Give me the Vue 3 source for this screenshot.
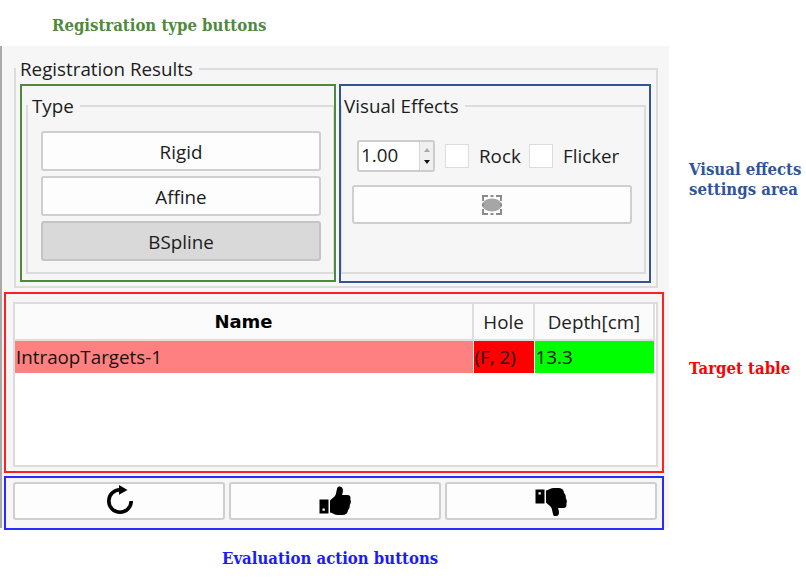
<template>
  <div class="page">
    <div class="panel">
      <fieldset class="group results">
        <legend>Registration Results</legend>
        <div class="results-row">
          <fieldset class="group type-group">
            <legend>Type</legend>
            <button v-for="t in types" :key="t" class="btn type-btn" :class="{ checked: t === selectedType }">{{ t }}</button>
          </fieldset>
          <fieldset class="group effects-group">
            <legend>Visual Effects</legend>
            <div class="effects-row">
              <div class="spinbox">
                <span class="spin-value">1.00</span>
                <span class="spin-arrows">
                  <span class="arrow up"></span>
                  <span class="arrow down"></span>
                </span>
              </div>
              <span class="check"></span>
              <span class="check-label rock">Rock</span>
              <span class="check"></span>
              <span class="check-label">Flicker</span>
            </div>
            <button class="btn effect-btn">
              <svg width="22" height="22" viewBox="0 0 22 22">
                <ellipse cx="11" cy="11" rx="10" ry="6.5" fill="#a6a6a6" />
                <path d="M7 2H2V7M15 2h5V7M7 20H2V15M15 20h5V15M9.5 2h3M9.5 20h3M2 9.5v3M20 9.5v3" fill="none" stroke="#8c8c8c" stroke-width="2" />
              </svg>
            </button>
          </fieldset>
        </div>
      </fieldset>

      <div class="table-frame">
        <table>
          <thead>
            <tr>
              <th class="name-col">Name</th>
              <th class="hole-col">Hole</th>
              <th class="depth-col">Depth[cm]</th>
            </tr>
          </thead>
          <tbody>
            <tr v-for="row in targets" :key="row.name">
              <td class="cell-name">{{ row.name }}</td>
              <td class="cell-hole">{{ row.hole }}</td>
              <td class="cell-depth">{{ row.depth }}</td>
            </tr>
          </tbody>
        </table>
      </div>

      <div class="actions">
        <button class="btn action-btn">
          <svg width="30" height="34" viewBox="0 0 30 34">
            <path d="M16 5.8A11.2 11.2 0 1 0 27.2 17" fill="none" stroke="#000" stroke-width="3.6" />
            <path d="M15 1L23.5 6L15 10.8Z" fill="#000" />
          </svg>
        </button>
        <button class="btn action-btn">
          <svg width="32" height="30" viewBox="0 0 32 30">
            <path fill-rule="evenodd" d="M0.5 13.5H9.5V27.5H0.5ZM3.5 22.5V24.8H5.8V22.5Z" fill="#000" />
            <path d="M11 14.5C13 12.5 15.5 11 16.5 9C17.5 6.5 17.5 3.5 18.5 1.5C19.5 0 22 0.3 23.3 2C24.5 3.8 23.8 7 23 9H28.5C31 9 32 11 31.3 13C32.2 15 32 17.5 30.8 18.8C31 21 30.3 23 29 24C29 26.8 27 28.8 24 29H19C16 29 13.5 27 11 26.5Z" fill="#000" />
          </svg>
        </button>
        <button class="btn action-btn">
          <svg width="32" height="30" viewBox="0 -1 32 30">
            <path fill-rule="evenodd" d="M0.5 2.5H9.5V16.5H0.5ZM3.5 5.2V7.5H5.8V5.2Z" fill="#000" />
            <path d="M11 15.5C13 17.5 15.5 19 16.5 21C17.5 23.5 17.5 26.5 18.5 28.5C19.5 30 22 29.7 23.3 28C24.5 26.2 23.8 23 23 21H28.5C31 21 32 19 31.3 17C32.2 15 32 12.5 30.8 11.2C31 9 30.3 7 29 6C29 3.2 27 1.2 24 1H19C16 1 13.5 3 11 3.5Z" fill="#000" />
          </svg>
        </button>
      </div>
    </div>

    <!-- annotations on top of the screenshot -->
    <div class="mark mark-type"></div>
    <div class="mark mark-effects"></div>
    <div class="mark mark-table"></div>
    <div class="mark mark-actions"></div>
    <div class="note note-type">Registration type buttons</div>
    <div class="note note-effects">Visual effects<br />settings area</div>
    <div class="note note-table">Target table</div>
    <div class="note note-actions">Evaluation action buttons</div>
  </div>
</template>

<script setup>
const types = ['Rigid', 'Affine', 'BSpline']
const selectedType = 'BSpline'

const targets = [
  { name: 'IntraopTargets-1', hole: '(F, 2)', depth: '13.3' }
]
</script>

<style scoped>
.page {
  position: relative;
  width: 806px;
  height: 578px;
  padding-top: 46px;
  box-sizing: border-box;
  overflow: hidden;
  background: #fff;
  font-family: "Open Sans", "Noto Sans", sans-serif;
  color: #1c1c1c;
}

.panel {
  width: 669px;
  height: 482px;
  box-sizing: border-box;
  padding: 11px 11px 0 11px;
  background: #f6f6f6;
  border-left: 2px solid #a9a9a9;
}

.group {
  margin: 0;
  padding: 0;
  min-width: 0;
  box-sizing: border-box;
  border: 2px solid #dcdcdc;
}

.group legend {
  padding: 0 6px 0 4px;
  font-size: 18.8px;
  line-height: 24px;
}

.results {
  height: 231px;
  margin-left: 1px;
  padding: 13px 10px 0;
}

.results > legend {
  margin-left: -10px;
}

.results-row {
  display: flex;
  gap: 5px;
}

.type-group {
  width: 309px;
  height: 180px;
  flex: none;
  padding: 13px 0 0 13px;
}

.type-group > legend {
  margin-left: -13px;
}

.effects-group {
  width: 306px;
  height: 180px;
  flex: none;
  padding: 23px 0 0 10px;
}

.effects-group > legend {
  margin-left: -10px;
  padding-left: 2px;
}

.btn {
  display: flex;
  align-items: center;
  justify-content: center;
  padding: 0;
  box-sizing: border-box;
  border: 2px solid #cfcfcf;
  border-radius: 3px;
  background: #fdfdfd;
  font-family: inherit;
  font-size: 18.8px;
  color: #1c1c1c;
}

.type-btn {
  width: 280px;
  height: 40px;
  margin-bottom: 5px;
  padding-top: 1px;
}

.type-btn.checked {
  background: #d9d9d9;
  border-color: #c4c4c4;
}

.effects-row {
  display: flex;
  align-items: center;
  height: 30px;
  padding-left: 5px;
  font-size: 18.8px;
}

.spinbox {
  display: flex;
  width: 78px;
  height: 32px;
  box-sizing: border-box;
  border: 2px solid #cdcdcd;
  border-radius: 3px;
  background: #fff;
  margin-right: 10px;
}

.spin-value {
  flex: 1;
  padding-left: 2px;
  line-height: 27px;
}

.spin-arrows {
  display: flex;
  flex-direction: column;
  align-items: center;
  justify-content: center;
  gap: 8px;
  width: 13px;
  background: #f0f0f0;
  border-left: 1px solid #d8d8d8;
}

.arrow {
  width: 0;
  height: 0;
  border-left: 3px solid transparent;
  border-right: 3px solid transparent;
}

.arrow.up {
  border-bottom: 4px solid #a8a8a8;
}

.arrow.down {
  border-top: 4px solid #111;
}

.check {
  width: 24px;
  height: 24px;
  box-sizing: border-box;
  border: 1px solid #dcdcdc;
  background: #fff;
}

.check-label {
  margin-left: 10px;
}

.rock {
  width: 50px;
}

.effect-btn {
  width: 280px;
  height: 39px;
  margin-top: 14px;
}

.table-frame {
  width: 645px;
  height: 165px;
  margin-top: 14px;
  box-sizing: border-box;
  border: 2px solid #dcdcdc;
  background: #fff;
}

table {
  width: 640px;
  border-collapse: collapse;
  table-layout: fixed;
}

th {
  height: 35px;
  padding: 0;
  background: #fbfbfb;
  border-bottom: 2px solid #dedede;
  border-right: 2px solid #dedede;
  font-size: 18.8px;
  font-weight: 400;
  color: #222;
}

.name-col {
  width: 457px;
  font-family: "DejaVu Sans", sans-serif;
  font-size: 18px;
  font-weight: 700;
  color: #000;
}

.hole-col {
  width: 59px;
}

td {
  height: 32px;
  padding: 0 0 0 1px;
  font-size: 18.8px;
  color: #1a1010;
}

.cell-name {
  background: #ff8080;
}

.cell-hole {
  background: #ff0000;
  border-left: 1px solid #f5f5f5;
  border-right: 1px solid #f5f5f5;
}

.cell-depth {
  background: #00ff00;
}

.actions {
  display: flex;
  gap: 4px;
  width: 644px;
  margin-top: 15px;
}

.action-btn {
  flex: 1;
  height: 38px;
}

.mark {
  position: absolute;
  box-sizing: border-box;
  border: 2px solid;
  pointer-events: none;
}

.mark-type {
  left: 20px;
  top: 84px;
  width: 316px;
  height: 198px;
  border-color: #4f8a3c;
}

.mark-effects {
  left: 339px;
  top: 84px;
  width: 312px;
  height: 199px;
  border-color: #2f5597;
}

.mark-table {
  left: 4px;
  top: 292px;
  width: 660px;
  height: 181px;
  border-color: #ff2020;
}

.mark-actions {
  left: 4px;
  top: 476px;
  width: 660px;
  height: 54px;
  border-color: #2a2aff;
}

.note {
  position: absolute;
  font-family: "DejaVu Serif", serif;
  font-stretch: condensed;
  font-size: 16.6px;
  line-height: 20px;
  font-weight: 700;
  white-space: nowrap;
}

.note-type {
  left: 52px;
  top: 15px;
  color: #4f8a3c;
}

.note-effects {
  left: 689px;
  top: 159px;
  color: #2f5597;
}

.note-table {
  left: 689px;
  top: 358px;
  color: #ff0000;
}

.note-actions {
  left: 222px;
  top: 548px;
  color: #1a1aff;
}
</style>
